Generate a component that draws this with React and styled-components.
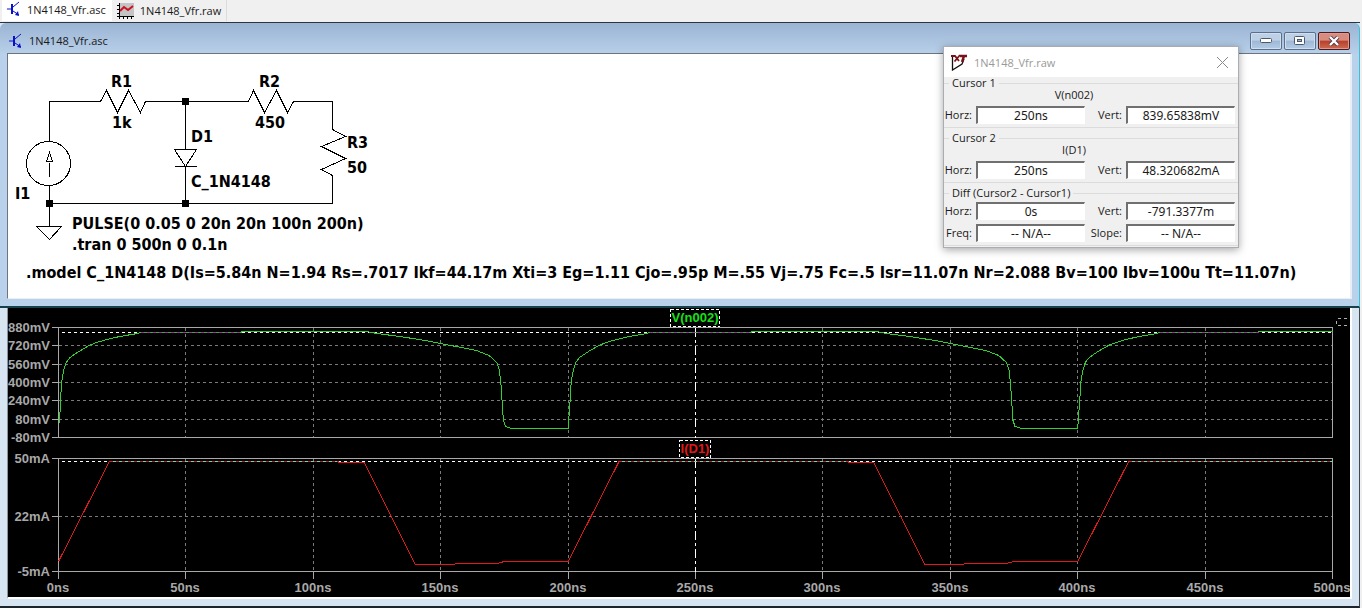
import React, { useLayoutEffect, useRef, useState } from 'react';
import styled, { createGlobalStyle } from 'styled-components';

const uiFont = '"Open Sans", "Noto Sans", sans-serif';
const fieldFont = '"Noto Sans", "Open Sans", sans-serif';

const GlobalStyle = createGlobalStyle`
  *, *::before, *::after { box-sizing: border-box; }
  body {
    margin: 0;
    background: #f0f0f0;
    color: #1a1a1a;
    font-family: ${uiFont};
    font-size: 12px;
  }
`;

const Page = styled.main`
  display: flex;
  flex-direction: column;
  min-height: 100vh;
`;

const TabBar = styled.nav`
  display: flex;
  height: 22px;
  padding: 0 2px 1px;
  background: #f0f0f0;
`;

const Tab = styled.button`
  display: flex;
  align-items: center;
  gap: 6px;
  padding: 0 5px ${(p) => (p.$active ? 3 : 0)}px;
  border: 0;
  border-right: 1px solid ${(p) => (p.$active ? '#ffffff' : '#dcdcdc')};
  background: ${(p) => (p.$active ? '#ffffff' : '#f0f0f0')};
  color: #1a1a1a;
  font: 11px ${uiFont};
  white-space: nowrap;
`;

const Workspace = styled.div`
  flex: 1;
  display: flex;
  flex-direction: column;
  margin-right: 2px;
  border-top: 1px solid #2c3440;
  background: #d7e4f2;
`;

const SchematicWindow = styled.section`
  position: relative;
  padding: 0 7px 7px;
  border-right: 1px solid #35c3d8;
  border-bottom: 2px solid #16404a;
  border-radius: 6px 6px 0 0;
  background: linear-gradient(#9bb4d3, #b9d1ea 32px, #b9d1ea);
`;

const TitleBar = styled.header`
  display: flex;
  align-items: center;
  justify-content: space-between;
  height: 30px;
  padding: 5px 2px 0 2px;
`;

const Title = styled.h1`
  display: flex;
  align-items: center;
  gap: 6px;
  margin: 0;
  font: 11px ${uiFont};
`;

const WindowButtons = styled.div`
  display: flex;
  gap: 2px;
`;

const WindowButton = styled.button`
  display: grid;
  place-items: center;
  width: 32px;
  height: 18px;
  padding: 0;
  border: 1px solid ${(p) => (p.$danger ? '#4c1a1e' : '#5a6f8b')};
  border-radius: 2px;
  box-shadow: inset 0 0 0 1px ${(p) => (p.$danger ? '#dc9a90' : '#cfdff0')};
  background: ${(p) =>
    p.$danger
      ? 'linear-gradient(#d88c80 0 45%, #b8402c 50%, #cc6a50)'
      : 'linear-gradient(#bdd0e6 0 45%, #9db8d6 50%, #b4cbe4)'};
`;

const SchematicCanvas = styled.div`
  height: 246px;
  overflow: hidden;
  border: 1px solid #6c7480;
  border-right: 2px solid #e8eef6;
  border-bottom: 1px solid #e8eef6;
  background: #ffffff;
`;

const SchematicDrawing = styled.svg`
  display: block;
  width: 1330px;
  height: 244px;
  fill: none;
  stroke: #000000;
  shape-rendering: crispEdges;

  text {
    fill: #000000;
    stroke: none;
    font: bold 16px "DejaVu Sans Condensed", "Noto Sans", sans-serif;
  }
`;

const Dialog = styled.aside`
  position: absolute;
  top: 23px;
  right: 120px;
  width: 296px;
  padding-bottom: 1px;
  border: 1px solid #a9adb3;
  background: #f0f0f0;
  box-shadow: 0 2px 8px rgba(0, 0, 0, 0.35);
`;

const DialogTitle = styled.header`
  display: flex;
  align-items: center;
  gap: 6px;
  height: 30px;
  padding: 0 10px 0 7px;
  background: #ffffff;
  color: #9a9a9a;
  font-size: 11px;
`;

const DialogName = styled.span`
  flex: 1;
`;

const CloseButton = styled.button`
  display: grid;
  place-items: center;
  padding: 0;
  border: 0;
  background: none;
`;

const Groups = styled.div`
  display: flex;
  flex-direction: column;
  gap: 4px;
`;

const Group = styled.fieldset`
  min-width: 0;
  margin: 0;
  padding: 0 1px 3px 0;
  border: 1px solid #dcdcdc;
  border-width: 1px 0;
  font-size: 11px;
  line-height: 12px;
`;

const Legend = styled.legend`
  margin-left: 5px;
  padding: 0 3px;
`;

const SignalName = styled.div`
  margin-bottom: 5px;
  padding-right: 33px;
  text-align: center;
`;

const FieldGrid = styled.div`
  display: grid;
  grid-template-columns: 28px 109px 33px 109px;
  column-gap: 4px;
  row-gap: 4px;
  align-items: center;
  padding-top: ${(p) => (p.$spaced ? 3 : 0)}px;
`;

const FieldLabel = styled.label`
  justify-self: end;
  white-space: nowrap;
  font-size: 11px;
`;

const FieldInput = styled.input`
  width: 100%;
  height: 18px;
  padding: 0;
  border: 1px solid #ffffff;
  border-top: 2px solid #707070;
  border-left: 2px solid #707070;
  border-radius: 0;
  background: #ffffff;
  color: #1a1a1a;
  text-align: center;
  font: 12px ${fieldFont};
`;

const WaveformWindow = styled.section`
  flex: 1;
  padding: 0 7px 7px;
  border-right: 1px solid #40484f;
  border-bottom: 2px solid #1c242c;
  background: #d7e4f2;
`;

const PlotPane = styled.div`
  border-left: 1px solid #8d959c;
  border-right: 2px solid #ffffff;
  border-bottom: 2px solid #ffffff;
  background: #000000;
`;

const PlotDrawing = styled.svg`
  display: block;
  width: 100%;
  height: 289px;
  fill: none;
  shape-rendering: crispEdges;

  text {
    fill: #a8a8a8;
    font: bold 13px "Liberation Sans", Arial, sans-serif;
  }
`;

const TraceLabel = styled.text`
  && {
    fill: ${(p) => p.$color};
  }
`;

function TransistorIcon() {
  return (
    <svg width="14" height="16" viewBox="0 0 14 16" fill="none" stroke="#0a10c8" aria-hidden="true">
      <path d="M0 8h5M12 1L6 6M6 10l6 4" strokeWidth="1" />
      <path d="M5 3v10" strokeWidth="2" />
      <path d="M12 15l-4-1 3-4z" fill="#0a10c8" stroke="none" />
    </svg>
  );
}

function WaveformIcon() {
  return (
    <svg width="17" height="16" viewBox="0 0 17 16" fill="none" aria-hidden="true">
      <rect x="2" width="15" height="13" fill="#c4c4c4" />
      <path d="M2.5 0v16M0 13.5h17" stroke="#000" />
      <path d="M0 2.5h2M0 6.5h2M0 10.5h2M6.5 14v2M10.5 14v2M14.5 14v2" stroke="#000" />
      <path d="M3 8l4-4 4 3 5-4" stroke="#d01020" strokeWidth="2" />
    </svg>
  );
}

function LogoIcon() {
  return (
    <svg width="17" height="17" viewBox="0 0 17 17" fill="none" aria-hidden="true">
      <path d="M1.5 2v14L11 10l2-5" stroke="#111" strokeWidth="1.3" />
      <path d="M0 2h4l4 5M9 1L3.5 7.5" stroke="#7a1018" strokeWidth="1.8" />
      <path d="M9 2h7M13 2l-2 6" stroke="#7a1018" strokeWidth="2.4" />
    </svg>
  );
}

const schematicLabels = [
  { x: 111, y: 87, text: 'R1' },
  { x: 112, y: 128, text: '1k' },
  { x: 259, y: 87, text: 'R2' },
  { x: 255, y: 128, text: '450' },
  { x: 191, y: 142, text: 'D1' },
  { x: 191, y: 187, text: 'C_1N4148' },
  { x: 347, y: 148, text: 'R3' },
  { x: 347, y: 173, text: '50' },
  { x: 15, y: 199, text: 'I1' },
  { x: 72, y: 229, text: 'PULSE(0 0.05 0 20n 20n 100n 200n)' },
  { x: 72, y: 250, text: '.tran 0 500n 0 0.1n' },
  {
    x: 26,
    y: 278,
    text: '.model C_1N4148 D(Is=5.84n N=1.94 Rs=.7017 Ikf=44.17m Xti=3 Eg=1.11 Cjo=.95p M=.55 Vj=.75 Fc=.5 Isr=11.07n Nr=2.088 Bv=100 Ibv=100u Tt=11.07n)',
  },
];

const junctions = [[185, 101], [185, 203], [49, 203]];

function Schematic() {
  return (
    <SchematicDrawing viewBox="8 54 1330 244" role="img" aria-label="Schematic">
      <g transform="translate(0.5 0.5)">
        <path d="M49 141V101H100L106 90L117 112L128 90L140 112L145 101H248L253 90L264 112L276 90L287 112L293 101H332V129L345 136L321 146L345 158L321 169L332 175V203H49" />
        <path d="M49 185V226M36 226H61L49 239ZM185 101V149M174 149H196L185 166ZM174 166H196M185 166V203" />
        <circle cx="48" cy="163" r="22" />
        <path d="M49 176V162M49 152L46 161H52Z" />
      </g>
      {junctions.map(([x, y]) => (
        <rect key={`${x}-${y}`} x={x - 3} y={y - 3} width="7" height="7" fill="#000" stroke="none" />
      ))}
      {schematicLabels.map((l) => (
        <text key={l.text} x={l.x} y={l.y}>{l.text}</text>
      ))}
    </SchematicDrawing>
  );
}

function Field({ id, label, value }) {
  return (
    <>
      <FieldLabel htmlFor={id}>{label}</FieldLabel>
      <FieldInput id={id} defaultValue={value} readOnly />
    </>
  );
}

function CursorDialog() {
  return (
    <Dialog aria-label="Cursor readout">
      <DialogTitle>
        <LogoIcon />
        <DialogName>1N4148_Vfr.raw</DialogName>
        <CloseButton aria-label="Close readout">
          <svg width="11" height="11" viewBox="0 0 11 11" stroke="#8a8a8a" aria-hidden="true">
            <path d="M0 0l11 11M11 0L0 11" />
          </svg>
        </CloseButton>
      </DialogTitle>
      <Groups>
        <Group>
          <Legend>Cursor 1</Legend>
          <SignalName>V(n002)</SignalName>
          <FieldGrid>
            <Field id="c1-horz" label="Horz:" value="250ns" />
            <Field id="c1-vert" label="Vert:" value="839.65838mV" />
          </FieldGrid>
        </Group>
        <Group>
          <Legend>Cursor 2</Legend>
          <SignalName>I(D1)</SignalName>
          <FieldGrid>
            <Field id="c2-horz" label="Horz:" value="250ns" />
            <Field id="c2-vert" label="Vert:" value="48.320682mA" />
          </FieldGrid>
        </Group>
        <Group>
          <Legend>Diff (Cursor2 - Cursor1)</Legend>
          <FieldGrid $spaced>
            <Field id="diff-horz" label="Horz:" value="0s" />
            <Field id="diff-vert" label="Vert:" value="-791.3377m" />
            <Field id="diff-freq" label="Freq:" value="-- N/A--" />
            <Field id="diff-slope" label="Slope:" value="-- N/A--" />
          </FieldGrid>
        </Group>
      </Groups>
    </Dialog>
  );
}

const voltageTicks = [
  ['880mV', 19], ['720mV', 37], ['560mV', 56], ['400mV', 74],
  ['240mV', 92], ['80mV', 111], ['-80mV', 129],
];
const currentTicks = [['50mA', 150], ['22mA', 208], ['-5mA', 263]];
const timeTicks = [0, 50, 100, 150, 200, 250, 300, 350, 400, 450, 500];

// Rising and falling parts of one 200 ns period: [time in ns, pixel row].
const rise = [
  [0.8, 92], [1.2, 74], [2, 62], [3, 54], [4.5, 49], [8, 43], [12, 37],
  [15, 34], [19, 31], [24, 28], [31, 25], [32, 24],
];
const fall = [
  [121, 23], [125, 25], [134, 28], [144, 32], [150, 35], [158, 39], [164, 42],
  [169, 47], [172, 54], [173, 61], [173.6, 74], [174.6, 112], [175.4, 118],
  [178, 120], [200, 120],
];
const shift = (points, dt) => points.map(([t, y]) => [t + dt, y]);
const tail = [[72, 24], [72, 23]];

const voltageTrace = [
  [0.4, 115], ...rise, ...tail, ...fall,
  ...shift(rise, 200), ...shift(tail, 200), ...shift(fall, 200),
  ...shift(rise, 400), [471, 24], [471, 23], [500, 23],
];
const currentPeriod = [[0, 253], [20, 153], [110, 153], [110, 154], [120, 154], [140, 256], [154, 256], [157, 255], [172, 255], [175, 253]];
const currentTrace = [
  ...currentPeriod, ...shift(currentPeriod, 200), [400, 253], [420, 153], [500, 153],
];

function Waveforms() {
  const ref = useRef(null);
  const [width, setWidth] = useState(1342);

  useLayoutEffect(() => {
    const measure = () => setWidth(Math.round(ref.current.getBoundingClientRect().width));
    measure();
    window.addEventListener('resize', measure);
    return () => window.removeEventListener('resize', measure);
  }, []);

  const left = 50;
  const right = width - 18;
  const x = (ns) => Math.round(left + (ns / 500) * (right - left));
  const path = (points) =>
    points.map(([t, y], i) => `${i ? 'L' : 'M'}${left + (t / 500) * (right - left)} ${y}`).join('');
  const mid = x(250);

  return (
    <PlotDrawing ref={ref} role="img" aria-label="Waveforms">
      {[...voltageTicks, ...currentTicks].map(([label, y]) => (
        <text key={label} x={left - 8} y={y + 5} textAnchor="end">{label}</text>
      ))}
      {timeTicks.map((t) => (
        <text key={t} x={x(t)} y="284" textAnchor="middle">{`${t}ns`}</text>
      ))}
      <g transform="translate(0.5 0.5)">
        <g stroke="#7a7a7a" strokeDasharray="3 3">
          {voltageTicks.slice(1, -1).map(([l, y]) => <path key={l} d={`M${left} ${y}H${right}`} />)}
          <path d={`M${left} 208H${right}`} />
          {timeTicks.slice(1, -1).map((t) => (
            <path key={t} d={`M${x(t)} 19V129M${x(t)} 150V263`} />
          ))}
        </g>
        <g stroke="#a8a8a8">
          <path d={`M${left} 19H${right}V129H${left}Z`} />
          <path d={`M${left} 150H${right}V263H${left}Z`} />
          {[...voltageTicks, ...currentTicks].map(([l, y]) => (
            <path key={l} d={`M${left - 7} ${y}H${left}`} />
          ))}
          {timeTicks.map((t) => <path key={t} d={`M${x(t)} 263V270`} />)}
        </g>
        <g stroke="#ffffff" strokeDasharray="3 3">
          <path d={`M${left + 3} 24H${right}M${left + 3} 153H${right}`} />
          <path d={`M${width + 20} 10H${width - 14}V17H${width + 20}`} stroke="#b0b0b0" />
        </g>
        <path d={`M${mid} 19V129M${mid} 150V263`} stroke="#ffffff" strokeDasharray="9 3 3 3" />
        <path d={path(voltageTrace)} stroke="#30d030" />
        <path d={path(currentTrace)} stroke="#e01818" />
        {[0, 200, 400].map((t) => (
          <g key={t}>
            <path d={`M${x(t + 32)} 24H${x(t + 71)}`} stroke="#40a850" />
            <path d={`M${x(t + 32)} 24H${x(t + 71)}`} stroke="#a030a0" strokeDasharray="3 3" />
            <path d={`M${x(t + 21)} 153H${x(Math.min(t + 109, 500))}`} stroke="#b02030" />
            <path d={`M${x(t + 21)} 153H${x(Math.min(t + 109, 500))}`} stroke="#78d8a8" strokeDasharray="3 3" />
          </g>
        ))}
        <g fill="#000000" stroke="#ffffff" strokeDasharray="3 2">
          <rect x={mid - 25} y="1" width="49" height="17" />
          <rect x={mid - 16} y="132" width="31" height="17" />
        </g>
      </g>
      <TraceLabel $color="#18e018" x={mid} y="14" textAnchor="middle">V(n002)</TraceLabel>
      <TraceLabel $color="#e01818" x={mid} y="145" textAnchor="middle">I(D1)</TraceLabel>
    </PlotDrawing>
  );
}

export default function App() {
  return (
    <Page>
      <GlobalStyle />
      <TabBar>
        <Tab $active>
          <TransistorIcon />
          1N4148_Vfr.asc
        </Tab>
        <Tab>
          <WaveformIcon />
          1N4148_Vfr.raw
        </Tab>
      </TabBar>
      <Workspace>
        <SchematicWindow>
          <TitleBar>
            <Title>
              <TransistorIcon />
              1N4148_Vfr.asc
            </Title>
            <WindowButtons>
              <WindowButton aria-label="Minimize">
                <svg width="12" height="6" viewBox="0 0 12 6" aria-hidden="true">
                  <rect x="0.5" y="0.5" width="11" height="4" rx="1" fill="#fff" stroke="#4a5868" />
                </svg>
              </WindowButton>
              <WindowButton aria-label="Maximize">
                <svg width="12" height="10" viewBox="0 0 12 10" aria-hidden="true">
                  <rect x="0.5" y="0.5" width="10" height="8" rx="1" fill="#fff" stroke="#4a5868" />
                  <rect x="3.5" y="3.5" width="4" height="2" fill="#9db8d6" stroke="#4a5868" />
                </svg>
              </WindowButton>
              <WindowButton $danger aria-label="Close">
                <svg width="12" height="10" viewBox="0 0 12 10" fill="none" aria-hidden="true">
                  <path d="M2 1l8 8M10 1L2 9" stroke="#4a3c48" strokeWidth="4" />
                  <path d="M2 1l8 8M10 1L2 9" stroke="#fff" strokeWidth="2.4" />
                </svg>
              </WindowButton>
            </WindowButtons>
          </TitleBar>
          <SchematicCanvas>
            <Schematic />
          </SchematicCanvas>
          <CursorDialog />
        </SchematicWindow>
        <WaveformWindow>
          <PlotPane>
            <Waveforms />
          </PlotPane>
        </WaveformWindow>
      </Workspace>
    </Page>
  );
}
